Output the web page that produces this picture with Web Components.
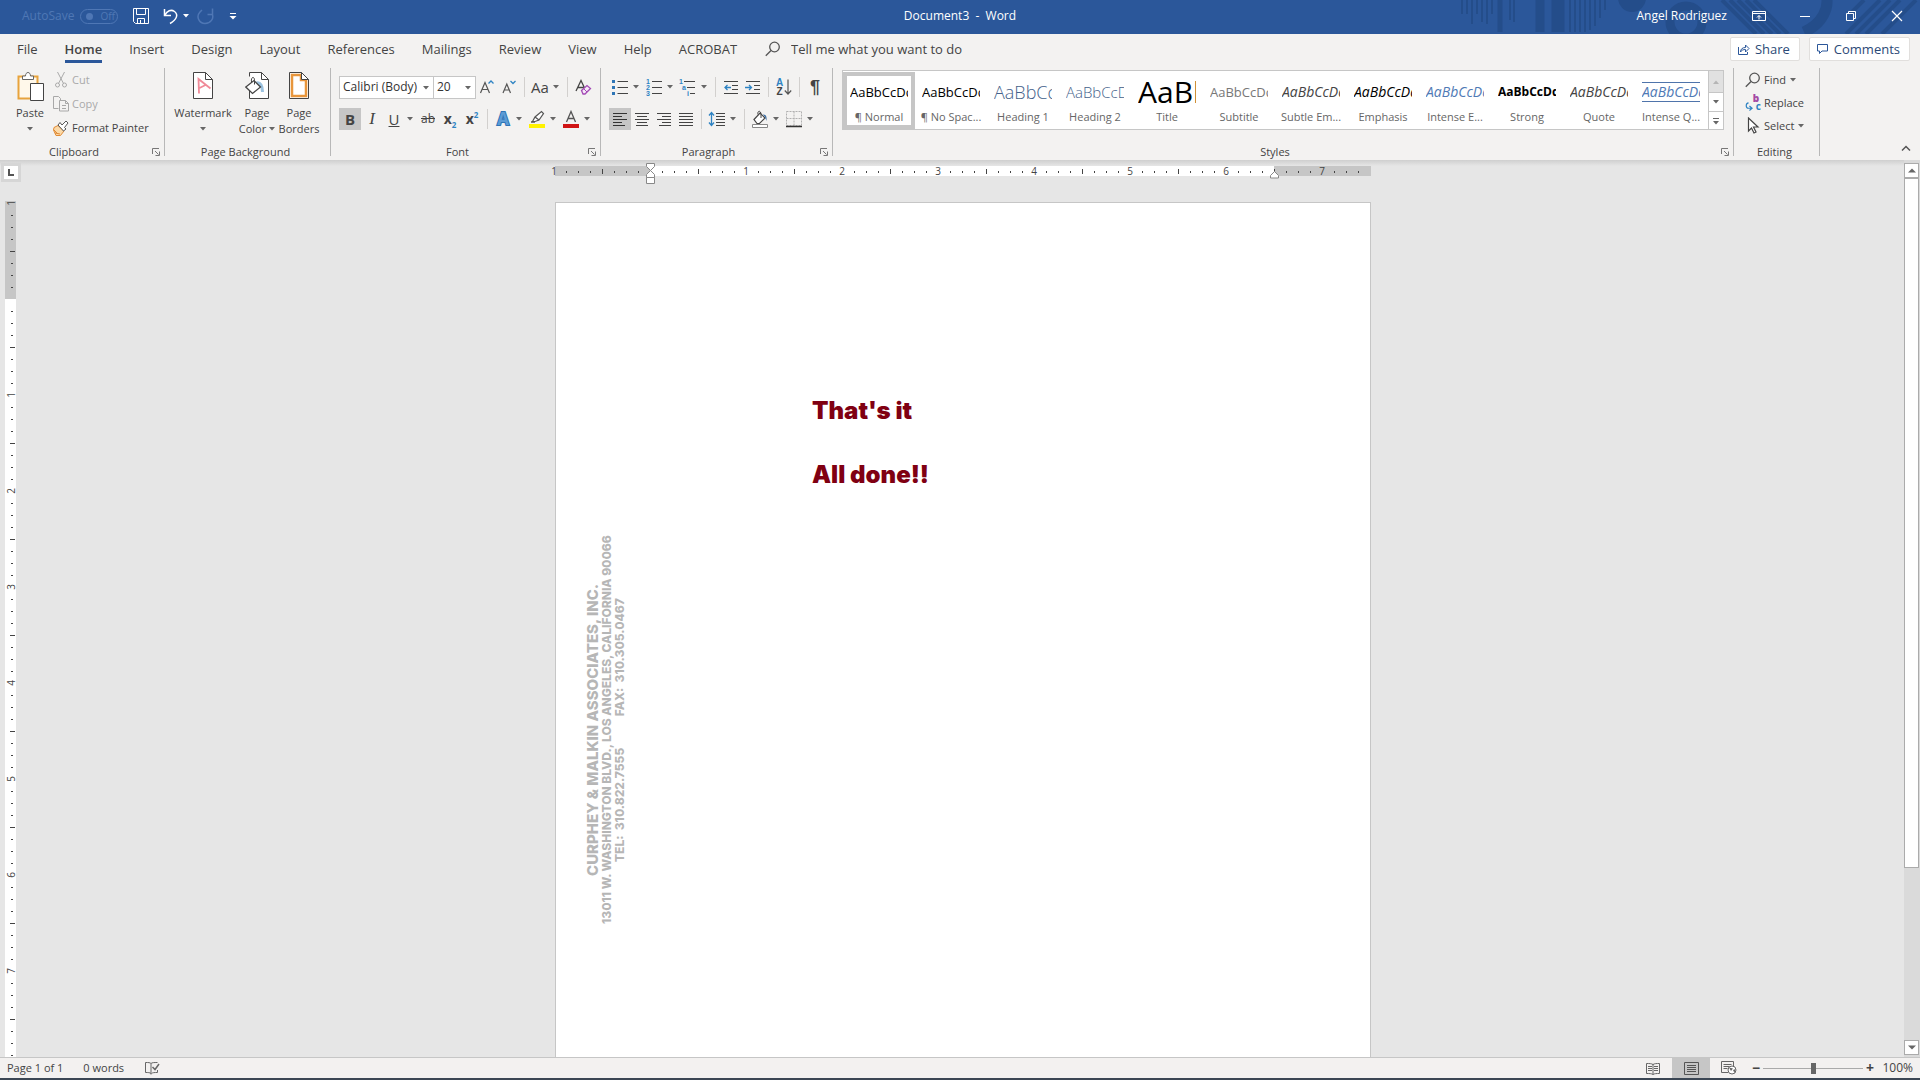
<!DOCTYPE html>
<html lang="en">
<head>
<meta charset="utf-8">
<title>Document3 - Word</title>
<style>
  html, body { height: 100%; margin: 0; }
  body {
    font-family: "Open Sans", "Noto Sans", sans-serif;
    font-size: 12px;
    line-height: 16px;
    color: #444;
    overflow: hidden;
  }
</style>
</head>
<body>
<word-app></word-app>

<script>
// name: [width, height, markup]
const ICONS = {
  save: [18, 18, '<g fill="none" stroke="#fff"><path d="M1.5 1.5h15v15h-13l-2-2z"/><path d="M4.500 1.500v6h9v-6M5.500 16.500v-5h7v5M8.500 16v-3"/></g>'],
  undo: [18, 18, '<path d="M2.500 2v6.500H9M3 8C5 4 9 2 12.500 4.500c4 3 2.500 8-4.500 12" fill="none" stroke="#fff" stroke-width="1.500"/>'],
  redo: [18, 18, '<path d="M11.500 7.500h5v-6M16 6.500c2.500 5-1.500 10-7 10S-.5 10 4 5l2-2" fill="none" stroke="#4f77b5" stroke-width="1.500"/>'],
  customize: [8, 8, '<path d="M1 1.500h6" stroke="#fff"/><path d="M.5 4h7L4 7.500z" fill="#fff"/>'],
  downWhite: [6, 4, '<path d="M0 0h6L3 3.500z" fill="#fff"/>'],
  down: [6, 4, '<path d="M0 0h6L3 3.500z" fill="#666"/>'],
  up: [8, 5, '<path d="M0 4.500h8L4 .5z" fill="#666"/>'],
  upDim: [6, 4, '<path d="M0 4h6L3 .5z" fill="#b5b5b5"/>'],
  downBig: [8, 5, '<path d="M0 .5h8L4 4.500z" fill="#666"/>'],
  more: [8, 8, '<path d="M1 1.500h6" stroke="#666"/><path d="M1 4h6L4 7.500z" fill="#666"/>'],
  ribbonOpts: [14, 12, '<g fill="none" stroke="#fff"><path d="M.5 1.500h13v9H.5zM.5 3.500h13M7 9.500v-4M5 7.500l2-2 2 2"/></g>'],
  minimize: [12, 12, '<path d="M1 6.500h10" stroke="#fff"/>'],
  restore: [12, 12, '<g fill="none" stroke="#fff"><path d="M1.500 3.500h7v7h-7zM3.500 3V1.500h7v7H9"/></g>'],
  close: [12, 12, '<path d="M1 1l10 10M11 1L1 11" stroke="#fff" stroke-width="1.200"/>'],
  search: [16, 16, '<g fill="none" stroke="#555" stroke-width="1.300"><circle cx="9.500" cy="6" r="4.800"/><path d="M6 9.500L.8 14.800"/></g>'],
  share: [13, 13, '<g fill="none" stroke="#2b579a"><path d="M1.500 4v7.500h9V9"/><path d="M3.500 9c0-3 2-4.500 5-4.500V2l3.500 3.500L8.500 9V6.500c-2 0-4 .5-5 2.500z"/></g>'],
  comment: [13, 12, '<path d="M1.500 1.500h10v6.500H6l-2.500 2.500V8h-2z" fill="none" stroke="#2b579a"/>'],
  paste: [28, 32, '<path d="M2.500 5.500h19v22h-19z" fill="#fff8ea" stroke="#e8a33d" stroke-width="2"/><path d="M6.500 8.500V5h3c0-2 1-3.500 2.500-3.500S14.500 3 14.500 5h3v3.500z" fill="#fff" stroke="#666"/><path d="M14.500 12.500h13v17h-13z" fill="#fff" stroke="#444"/>'],
  cut: [12, 16, '<g fill="none" stroke="#aaa"><path d="M2.500 0l6 11.500M9.500 0l-6 11.500"/><circle cx="2.500" cy="13" r="2"/><circle cx="9.500" cy="13" r="2"/></g>'],
  copy: [17, 16, '<g fill="none" stroke="#a8a8a8"><path d="M5.500 12.500h-5V.5h5l2 2V4"/><path d="M6.500 4.500h6l3 3v7.500h-9zM12.500 4.500v3h3M9 9.500h4M9 12.500h4"/></g>'],
  painter: [16, 15, '<path d="M1 6.500l4-2 6 5.500-3.500 4.500H3L.5 9z" fill="#fbd9a8" stroke="#e08a34"/><path d="M2 12l5 1M1 9l3 3" stroke="#e08a34"/><path d="M5 4l2-2.500 2 2.500 4-4 2 2-3.500 4.500L13 8l-2.500 2z" fill="#fff" stroke="#555"/>'],
  watermark: [23, 30, '<path d="M1.500 1.500h12l7 7v19h-19z" fill="#fff" stroke="#444"/><path d="M13.500 1.500v7h7" fill="none" stroke="#444"/><path d="M7 22.500L6.500 8l12 9.500M6.500 17.500l7-3.500" fill="none" stroke="#f08a98" stroke-width="1.800"/>'],
  pageColor: [25, 30, '<path d="M5.500 1.500h11l7 7v19h-19z" fill="#fff"/><path d="M4.500 19v8.500h19v-19l-7-7h-12v4M16.500 1.500v7h7" fill="none" stroke="#444"/><path d="M11.500 12c4-1 6 3 6 9" fill="none" stroke="#9cc3e0" stroke-width="3"/><path d="M.8 16L9 9.500l6.500 6.500-8 6.500z" fill="#fff" stroke="#444" stroke-width="1.300"/><path d="M6.500 11c-1-5 3-6.500 3-1.500v4" fill="none" stroke="#444"/>'],
  pageBorders: [23, 30, '<path d="M1.500 1.500h12l7 7v19h-19z" fill="#fff" stroke="#444"/><path d="M4 4h9v5h5v16H4z" fill="none" stroke="#e8963c" stroke-width="2.500"/><path d="M13.500 1.500v7h7z" fill="#fff" stroke="#444"/>'],
  launcher: [8, 8, '<g fill="none" stroke="#777"><path d="M.5 6V.5H7M3 3l3.500 3.500M7.500 3.500v4h-4"/></g>'],
  grow: [16, 16, '<path d="M1.500 14L6 3.500 10.500 14M3 10.500h6" fill="none" stroke="#555" stroke-width="1.200"/><path d="M9.500 4.500L12 2l2.500 2.500" fill="none" stroke="#2e83c3" stroke-width="1.300"/>'],
  shrink: [16, 16, '<path d="M2 14l3.800-9 3.700 9M3.500 11h5" fill="none" stroke="#555" stroke-width="1.200"/><path d="M9.500 2L12 4.500 14.500 2" fill="none" stroke="#2e83c3" stroke-width="1.300"/>'],
  eraser: [18, 18, '<path d="M2 13L7 2.500 11 11M4 9.500h5.500" fill="none" stroke="#444" stroke-width="1.300"/><path d="M7.500 12.500l5.500-5 3.500 3-5.500 5.500H9z" fill="#f6eaf8" stroke="#a349b5" stroke-width="1.300"/><path d="M9.500 10.500l3.500 3.500" stroke="#a349b5"/>'],
  highlight: [18, 18, '<path d="M1 14h16v4H1z" fill="#fff200"/><path d="M4.500 11.500L7 7l6.500-5.500 2 2L11 10l-4 1.500z" fill="#fff" stroke="#555" stroke-width="1.200"/><path d="M7 7l4 3M3 12h4" stroke="#555" stroke-width="1.300"/>'],
  fontColor: [18, 18, '<path d="M1 14h16v4H1z" fill="#d01414"/><path d="M4.500 12L9 1.500 13.500 12M6 8.500h6" fill="none" stroke="#555" stroke-width="1.300"/>'],
  bullets: [16, 16, '<path d="M0 1h3v3H0zM0 7h3v3H0zM0 13h3v3H0z" fill="#2e75b6"/><path d="M5.500 2.500H16M5.500 8.500H16M5.500 14.500H16" stroke="#444"/>'],
  alignLeft: [16, 16, '<path d="M1 2.500h14M1 5.500h9M1 8.500h14M1 11.500h9M1 14.500h12" stroke="#333"/>'],
  alignCenter: [16, 16, '<path d="M1 2.500h14M3 5.500h10M1 8.500h14M3 11.500h10M2 14.500h12" stroke="#444"/>'],
  alignRight: [16, 16, '<path d="M1 2.500h14M6 5.500h9M1 8.500h14M6 11.500h9M3 14.500h12" stroke="#444"/>'],
  justify: [16, 16, '<path d="M1 2.500h14M1 5.500h14M1 8.500h14M1 11.500h14M1 14.500h14" stroke="#444"/>'],
  outdent: [16, 16, '<path d="M1 2.500h14M9 6.500h6M9 10.500h6M1 14.500h14" stroke="#444"/><path d="M8 8.500H2M4.500 6L2 8.500 4.500 11" fill="none" stroke="#2e83c3" stroke-width="1.300"/>'],
  indent: [16, 16, '<path d="M1 2.500h14M9 6.500h6M9 10.500h6M1 14.500h14" stroke="#444"/><path d="M0 8.500h6.500M4 6l2.500 2.500L4 11" fill="none" stroke="#2e83c3" stroke-width="1.300"/>'],
  arrowDown: [8, 16, '<path d="M4 .5V15M.8 11.500L4 15l3.200-3.500" fill="none" stroke="#555" stroke-width="1.200"/>'],
  spacing: [18, 16, '<path d="M8 2.500h9M8 5.500h9M8 8.500h9M8 11.500h9M8 14.500h9" stroke="#444"/><path d="M3.500 1.500v13M1 4.500l2.500-3L6 4.500M1 11.500l2.500 3 2.500-3" fill="none" stroke="#2e83c3" stroke-width="1.300"/>'],
  shading: [18, 18, '<path d="M1.500 14.500h15v3h-15z" fill="#fff" stroke="#888"/><path d="M3 9.500L9 3l5 5-5.500 5.500H6z" fill="#fff" stroke="#444" stroke-width="1.200"/><path d="M7 4.500c-1-4 3-4.500 3 0V8" fill="none" stroke="#444"/><path d="M12 4.500c3 0 4 2 3.500 6.500l-1.500-4z" fill="#3a6ea5"/>'],
  borders: [16, 18, '<path d="M.5 1.500h15v14H.5zM8 1.500v14M.5 8.500h15" fill="none" stroke="#b0b0b0" stroke-dasharray="2 1"/><path d="M0 16.500h16" stroke="#333" stroke-width="1.500"/>'],
  arrow: [14, 17, '<path d="M2.500 1v13l3-3 2.500 5 2-1-2.500-5H12z" fill="#fff" stroke="#444" stroke-width="1.200"/>'],
  swap: [9, 9, '<path d="M4 .5C.5 1 .5 6.500 4 6.500h3.500M5 4l3 2.500L5 9" fill="none" stroke="#2e83c3" stroke-width="1.300"/>'],
  collapse: [10, 7, '<path d="M1 5.500l4-4 4 4" fill="none" stroke="#555" stroke-width="1.500"/>'],
  proof: [16, 14, '<g fill="none" stroke="#666"><path d="M7 12.500c-1-1-3-1-5.500-1V1.500c3 0 4.500 0 5.500 1v11M7 2.500c1-1 3-1 6.500-1M13.500 9v2.500c-3 0-5 0-6 1"/><path d="M8.500 6l2.500 2.500L15 3" stroke-width="1.500"/></g>'],
  readMode: [14, 13, '<path d="M.5 1.500c3 0 5 0 6.500 1 1.500-1 3.500-1 6.500-1v10c-3 0-5 0-6.500 1-1.500-1-3.500-1-6.500-1zM7 2v10.500M2 4.500h4M2 6.500h4M2 8.500h4M8 4.500h4M8 6.500h4M8 8.500h4" fill="none" stroke="#666"/>'],
  printLayout: [15, 13, '<path d="M.5.500h14v12H.5zM3 3.500h9M3 5.500h9M3 7.500h9M3 9.500h9" fill="none" stroke="#555"/>'],
  webLayout: [16, 14, '<path d="M7 11.500H.5v-11h12V5M2.500 3.500h8M2.500 5.500h6M2.500 7.500h4" fill="none" stroke="#666"/><circle cx="11" cy="9" r="4" fill="#fff" stroke="#666"/><path d="M8 6.500l4 1-2 2.500zM12 9l2.500-1-1 4z" fill="#666"/>']
};

function define(name, css, html) {
  customElements.define(name, class extends HTMLElement {
    constructor() {
      super();
      this.attachShadow({ mode: "open" });
    }
    connectedCallback() {
      const markup = typeof html === "function" ? html(this) : html;
      this.shadowRoot.innerHTML = `<style>
        *, *::before { box-sizing: border-box; }
        button { font: inherit; color: inherit; background: none; border: 0; padding: 0; margin: 0; }
        ${css}</style>${markup}`;
    }
  });
}

define("ui-icon", `
  :host { display: inline-flex; flex: none; }
  svg { display: block; }
`, el => {
  const [w, h, body] = ICONS[el.getAttribute("name")];
  return `<svg width="${w}" height="${h}" viewBox="0 0 ${w} ${h}" aria-hidden="true">${body}</svg>`;
});

/* ---------- title bar ---------- */

define("title-art", `
  :host { display: block; position: absolute; top: 0; right: 0; height: 34px; overflow: hidden; }
  svg { display: block; }
`, () => {
  const bars = [[2, 14], [7, 14], [12, 24], [17, 14], [22, 22], [27, 24], [32, 14], [50, 20], [54, 22], [110, 32], [115, 32], [120, 32], [125, 32], [130, 30], [135, 26], [140, 18], [145, 10]]
    .map(([x, h]) => `<path d="M${x} 0v${h}" stroke-width="2"/>`).join("");
  return `<svg width="460" height="34" fill="none" stroke="#244d8a">${bars}
    <path d="M40 0v32" stroke-width="5"/><path d="M80 0v32" stroke-width="9"/><path d="M98 0v32" stroke-width="13"/>
    <circle cx="172" cy="-2" r="14" fill="#244d8a" stroke="none"/>
    <circle cx="226" cy="22" r="16" stroke-width="9"/>
    <path d="M262 0l34 34M270 0l34 34M278 0l34 34M286 0l34 34M294 0l34 34" stroke-width="4"/>
    <path d="M366 -6c4 14-4 30-22 38" stroke-width="11"/>
    <path d="M386 34l34-34M396 34l34-34M406 34l34-34M422 34l34-34M390 14l14-14" stroke-width="4"/>
  </svg>`;
});

define("title-bar", `
  :host {
    display: grid; grid-template-columns: 1fr auto 1fr; align-items: center;
    position: relative; height: 34px; background: #2b579a; color: #fff; padding-bottom: 2px; box-sizing: border-box;
  }
  .quick, .window { display: flex; align-items: center; position: relative; }
  .quick { padding-left: 22px; }
  button { display: flex; align-items: center; justify-content: center; height: 32px; }
  .auto { color: #4f77b5; gap: 6px; }
  .pill { display: flex; align-items: center; width: 38px; height: 15px; border: 1px solid #4f77b5; border-radius: 8px; font-size: 10px; gap: 7px; padding-left: 5px; line-height: 13px; }
  .pill::before { content: ""; width: 7px; height: 7px; border-radius: 50%; background: #4f77b5; }
  .save { width: 42px; margin-left: 2px; }
  .undo { width: 26px; gap: 3px; }
  .redo { width: 34px; }
  .more { width: 22px; }
  .window { justify-content: flex-end; }
  .window button { width: 46px; }
  .user { margin-right: 9px; }
  .title { white-space: pre; }
`, `
  <title-art></title-art>
  <div class="quick">
    <button class="auto" disabled>AutoSave <span class="pill">Off</span></button>
    <button class="save" aria-label="Save"><ui-icon name="save"></ui-icon></button>
    <button class="undo" aria-label="Undo"><ui-icon name="undo"></ui-icon><ui-icon name="downWhite"></ui-icon></button>
    <button class="redo" aria-label="Redo" disabled><ui-icon name="redo"></ui-icon></button>
    <button class="more" aria-label="Customize"><ui-icon name="customize"></ui-icon></button>
  </div>
  <div class="title">Document3  -  Word</div>
  <div class="window">
    <span class="user">Angel Rodriguez</span>
    <button aria-label="Ribbon options"><ui-icon name="ribbonOpts"></ui-icon></button>
    <button aria-label="Minimize"><ui-icon name="minimize"></ui-icon></button>
    <button aria-label="Restore"><ui-icon name="restore"></ui-icon></button>
    <button aria-label="Close"><ui-icon name="close"></ui-icon></button>
  </div>
`);

/* ---------- tabs ---------- */

define("ribbon-tab", `
  :host { display: block; }
  button { position: relative; display: block; height: 28px; line-height: 28px; padding: 0 13px; font-size: 13px; }
  :host([active]) button { font-weight: 600; }
  :host([active]) button::before {
    content: ""; position: absolute; left: 13px; right: 13px; bottom: 0; height: 3px; background: #2b579a;
  }
`, `<button role="tab"><slot></slot></button>`);

define("ribbon-tabs", `
  :host { display: flex; align-items: center; height: 30px; padding: 0 10px 0 4px; font-size: 13px; }
  nav { display: flex; gap: 1px; }
  label { display: flex; align-items: center; flex: 1; gap: 10px; margin-left: 15px; }
  input { flex: 1; font: inherit; color: #444; background: none; border: 0; outline: 0; padding: 0; height: 24px; }
  input::placeholder { color: #444; opacity: 1; }
  .action { display: flex; align-items: center; gap: 5px; height: 24px; padding: 0 9px 0 6px; margin-left: 9px; background: #fff; border: 1px solid #e1dfdd; border-radius: 2px; color: #2b4a77; }
`, `
  <nav role="tablist">
    <ribbon-tab>File</ribbon-tab>
    <ribbon-tab active>Home</ribbon-tab>
    <ribbon-tab>Insert</ribbon-tab>
    <ribbon-tab>Design</ribbon-tab>
    <ribbon-tab>Layout</ribbon-tab>
    <ribbon-tab>References</ribbon-tab>
    <ribbon-tab>Mailings</ribbon-tab>
    <ribbon-tab>Review</ribbon-tab>
    <ribbon-tab>View</ribbon-tab>
    <ribbon-tab>Help</ribbon-tab>
    <ribbon-tab>ACROBAT</ribbon-tab>
  </nav>
  <label><ui-icon name="search"></ui-icon><input aria-label="Tell me what you want to do" placeholder="Tell me what you want to do"></label>
  <button class="action"><ui-icon name="share"></ui-icon>Share</button>
  <button class="action"><ui-icon name="comment"></ui-icon>Comments</button>
`);

/* ---------- ribbon building blocks ---------- */

define("ribbon-group", `
  :host { display: flex; height: 92px; }
  .main { flex: 1; min-width: 0; display: flex; flex-direction: column; padding-left: 8px; }
  .body { flex: 1; }
  .foot { display: flex; align-items: center; height: 16px; padding-right: 4px; margin-left: -8px; }
  .foot span { flex: 1; text-align: center; }
  .foot button { display: flex; padding-left: 4px; }
  .line { width: 1px; height: 88px; background: #b8b8b8; }
`, el => `
  <div class="main">
    <div class="body"><slot></slot></div>
    <div class="foot"><span>${el.getAttribute("label")}</span>${el.hasAttribute("launcher") ? `<button aria-label="${el.getAttribute("label")} settings"><ui-icon name="launcher"></ui-icon></button>` : ""}</div>
  </div>
  <div class="line"></div>
`);

define("tool-row", `
  :host { display: flex; align-items: center; height: 22px; margin-top: 8px; }
  :host([second]) { margin-top: 10px; }
`, `<slot></slot>`);

define("tool-sep", `
  :host { display: block; width: 1px; height: 20px; margin: 0 4px; background: #d2d0ce; }
`, "");

define("tool-button", `
  :host { display: block; }
  button { display: flex; align-items: center; height: 22px; }
  .face { display: flex; align-items: center; justify-content: center; width: 22px; height: 22px; font-size: 15px; white-space: nowrap; }
  :host([active]) .face { background: #c6c6c6; }
  .drop { width: 12px; padding-left: 2px; display: flex; }
`, el => `
  <button aria-label="${el.getAttribute("label")}">
    <span class="face">${el.getAttribute("icon") ? `<ui-icon name="${el.getAttribute("icon")}"></ui-icon>` : "<slot></slot>"}</span>
    ${el.hasAttribute("drop") ? '<span class="drop"><ui-icon name="down"></ui-icon></span>' : ""}
  </button>
`);

define("tool-select", `
  :host { display: flex; align-items: center; position: relative; height: 23px; background: #fff; border: 1px solid #c6c6c6; box-sizing: border-box; }
  select { appearance: none; width: 100%; height: 21px; border: 0; background: none; font: inherit; font-size: 12px; color: #333; padding: 0 12px 0 3px; outline: 0; }
  ui-icon { position: absolute; right: 4px; top: 9px; pointer-events: none; }
`, el => `
  <select aria-label="${el.getAttribute("label")}"><option>${el.getAttribute("value")}</option></select>
  <ui-icon name="down"></ui-icon>
`);

define("big-button", `
  :host { display: block; }
  button { display: flex; flex-direction: column; align-items: center; width: 100%; padding-top: 3px; }
  .pic { height: 34px; display: flex; align-items: flex-start; }
  .drop { height: 16px; display: flex; align-items: center; }
  .second { display: flex; align-items: center; gap: 3px; }
`, el => {
  const second = el.getAttribute("second");
  const drop = el.hasAttribute("drop") ? '<ui-icon name="down"></ui-icon>' : "";
  return `<button>
    <span class="pic"><ui-icon name="${el.getAttribute("icon")}"></ui-icon></span>
    <slot></slot>
    ${second ? `<span class="second">${second}${drop}</span>` : `<span class="drop">${drop}</span>`}
  </button>`;
});

define("line-button", `
  :host { display: block; }
  button { display: flex; align-items: center; height: 100%; white-space: nowrap; }
  .pic { display: flex; align-items: center; justify-content: center; width: 18px; margin-right: 2px; }
  .drop { margin-left: 4px; display: flex; }
  :host([disabled]) { color: #a9a9a9; }
`, el => `
  <button ${el.hasAttribute("disabled") ? "disabled" : ""}>
    <span class="pic">${el.getAttribute("icon") ? `<ui-icon name="${el.getAttribute("icon")}"></ui-icon>` : '<slot name="pic"></slot>'}</span>
    <slot></slot>
    ${el.hasAttribute("drop") ? '<span class="drop"><ui-icon name="down"></ui-icon></span>' : ""}
  </button>
`);

/* ---------- icons that carry letters ---------- */

define("list-glyph", `
  :host { display: block; }
  svg { display: block; font: bold 7px "Liberation Sans", sans-serif; fill: #2e83c3; }
  path { stroke: #444; }
`, el => el.getAttribute("kind") === "number"
  ? `<svg width="16" height="18"><text x="0" y="6">1</text><text x="0" y="12">2</text><text x="0" y="18">3</text><path d="M6 3.500h10M6 9.500h10M6 15.500h10"/></svg>`
  : `<svg width="18" height="18"><text x="0" y="6">1</text><text x="3" y="12">a</text><text x="8" y="18">i</text><path d="M5 3.500h11M8 9.500h8M11 15.500h5"/></svg>`);

define("sort-glyph", `
  :host { display: flex; align-items: center; gap: 1px; }
  span { display: flex; flex-direction: column; font: bold 10px/9px "Liberation Sans", sans-serif; color: #444; }
  b { color: #2e83c3; }
`, `<span><b>A</b>Z</span><ui-icon name="arrowDown"></ui-icon>`);

define("replace-glyph", `
  :host { display: grid; grid-template-columns: 8px 8px; font: bold 10px/8px "Open Sans", sans-serif; color: #2e83c3; }
  b { color: #a349a4; grid-column: 1 / 3; padding-left: 6px; }
  ui-icon { align-self: start; }
  i { font-style: normal; text-align: right; }
`, `<b>b</b><ui-icon name="swap"></ui-icon><i>c</i>`);

/* ---------- style gallery ---------- */

define("style-card", `
  :host { display: block; flex: none; width: 72px; }
  button { display: block; width: 72px; height: 57px; padding: 4px 3px 0; border: 4px solid transparent; color: #666; text-align: center; }
  :host([active]) button { border-color: #c6c6c6; }
  .sample { display: flex; align-items: center; width: 58px; height: 24px; margin-bottom: 5px; overflow: hidden; white-space: nowrap; color: var(--ink, #000); font-size: var(--size, 13px); font-style: var(--slant, normal); font-weight: var(--weight, 400); line-height: 24px; }
  :host([ruled]) .sample { height: 20px; margin: 2px 0 7px; border: solid #4f74ab; border-width: 1px 0; }
  .name { display: block; white-space: nowrap; margin: 0 -4px; }
`, `<button><span class="sample">AaBbCcDd</span><span class="name"><slot></slot></span></button>`);

define("style-gallery", `
  :host { display: flex; height: 60px; margin: 2px 9px 0 1px; background: #fff; border: 1px solid #c6c6c6; box-sizing: border-box; }
  .cards { display: flex; flex: 1; min-width: 0; overflow: hidden; padding-top: 1px; }
  .scroll { display: grid; grid-template-rows: 21px 19px 18px; width: 15px; border-left: 1px solid #c6c6c6; }
  .scroll button { display: flex; align-items: center; justify-content: center; }
  .scroll button + button { border-top: 1px solid #c6c6c6; }
  .scroll button:first-child { background: #e1e1e1; }
`, `
  <div class="cards"><slot></slot></div>
  <div class="scroll">
    <button aria-label="Previous styles" disabled><ui-icon name="upDim"></ui-icon></button>
    <button aria-label="Next styles"><ui-icon name="down"></ui-icon></button>
    <button aria-label="All styles"><ui-icon name="more"></ui-icon></button>
  </div>
`);

/* ---------- ribbon ---------- */

define("word-ribbon", `
  :host { display: flex; height: 96px; padding-top: 4px; box-sizing: border-box; font-size: 11px; }
  .clipboard { width: 165px; }
  .background { width: 166px; }
  .font { width: 270px; }
  .paragraph { width: 232px; }
  .styles { flex: 1; min-width: 0; }
  .editing { width: 86px; }
  .rest { width: 100px; display: flex; align-items: flex-end; justify-content: flex-end; padding: 0 9px 4px 0; }
  .cols { display: flex; }
  .lines { display: flex; flex-direction: column; }
  .lines line-button { height: 24px; }
  .clipboard big-button { width: 44px; }
  .background .cols { margin-left: -8px; padding-left: 5px; }
  .background big-button { width: 42px; }
  .background .mark { width: 66px; }
  .editing .lines { margin-left: 2px; }
  .editing .lines line-button { height: 23px; }
  .family { width: 95px; }
  .size { width: 43px; margin-left: -1px; }
  b, i, u, s { font-size: 15px; color: #444; }
  i { font-family: "Liberation Serif", serif; font-size: 17px; }
  s { font-size: 12px; }
  .x { font-size: 14px; font-weight: 700; }
  sub, sup { font-size: 8px; line-height: 0; color: #2e83c3; }
  .fx { color: #5b9bd5; font-weight: 700; font-size: 17px; -webkit-text-stroke: 2px #2e75b6; paint-order: stroke fill; }
  .pilcrow { font: bold 18px "Liberation Sans", sans-serif; }
`, `
  <ribbon-group class="clipboard" label="Clipboard" launcher>
    <div class="cols">
      <big-button icon="paste" drop>Paste</big-button>
      <div class="lines">
        <line-button icon="cut" disabled>Cut</line-button>
        <line-button icon="copy" disabled>Copy</line-button>
        <line-button icon="painter">Format Painter</line-button>
      </div>
    </div>
  </ribbon-group>
  <ribbon-group class="background" label="Page Background">
    <div class="cols">
      <big-button class="mark" icon="watermark" drop>Watermark</big-button>
      <big-button icon="pageColor" second="Color" drop>Page</big-button>
      <big-button icon="pageBorders" second="Borders">Page</big-button>
    </div>
  </ribbon-group>
  <ribbon-group class="font" label="Font" launcher>
    <tool-row>
      <tool-select class="family" label="Font" value="Calibri (Body)"></tool-select>
      <tool-select class="size" label="Font size" value="20"></tool-select>
      <tool-button label="Increase font size" icon="grow"></tool-button>
      <tool-button label="Decrease font size" icon="shrink"></tool-button>
      <tool-sep></tool-sep>
      <tool-button label="Change case" drop>Aa</tool-button>
      <tool-sep></tool-sep>
      <tool-button label="Clear formatting" icon="eraser"></tool-button>
    </tool-row>
    <tool-row second>
      <tool-button label="Bold" active><b>B</b></tool-button>
      <tool-button label="Italic"><i>I</i></tool-button>
      <tool-button label="Underline" drop><u>U</u></tool-button>
      <tool-button label="Strikethrough"><s>ab</s></tool-button>
      <tool-button label="Subscript"><span class="x">x<sub>2</sub></span></tool-button>
      <tool-button label="Superscript"><span class="x">x<sup>2</sup></span></tool-button>
      <tool-sep></tool-sep>
      <tool-button label="Text effects" drop><span class="fx">A</span></tool-button>
      <tool-button label="Highlight color" icon="highlight" drop></tool-button>
      <tool-button label="Font color" icon="fontColor" drop></tool-button>
    </tool-row>
  </ribbon-group>
  <ribbon-group class="paragraph" label="Paragraph" launcher>
    <tool-row>
      <tool-button label="Bullets" icon="bullets" drop></tool-button>
      <tool-button label="Numbering" drop><list-glyph kind="number"></list-glyph></tool-button>
      <tool-button label="Multilevel list" drop><list-glyph></list-glyph></tool-button>
      <tool-sep></tool-sep>
      <tool-button label="Decrease indent" icon="outdent"></tool-button>
      <tool-button label="Increase indent" icon="indent"></tool-button>
      <tool-sep></tool-sep>
      <tool-button label="Sort"><sort-glyph></sort-glyph></tool-button>
      <tool-sep></tool-sep>
      <tool-button label="Show marks"><span class="pilcrow">¶</span></tool-button>
    </tool-row>
    <tool-row second>
      <tool-button label="Align left" icon="alignLeft" active></tool-button>
      <tool-button label="Center" icon="alignCenter"></tool-button>
      <tool-button label="Align right" icon="alignRight"></tool-button>
      <tool-button label="Justify" icon="justify"></tool-button>
      <tool-sep></tool-sep>
      <tool-button label="Line spacing" icon="spacing" drop></tool-button>
      <tool-sep></tool-sep>
      <tool-button label="Shading" icon="shading" drop></tool-button>
      <tool-button label="Borders" icon="borders" drop></tool-button>
    </tool-row>
  </ribbon-group>
  <ribbon-group class="styles" label="Styles" launcher>
    <style-gallery>
      <style-card active>¶ Normal</style-card>
      <style-card>¶ No Spac...</style-card>
      <style-card style="--size: 18px; --ink: #44618a; --weight: 300">Heading 1</style-card>
      <style-card style="--size: 15px; --ink: #44618a; --weight: 300">Heading 2</style-card>
      <style-card style="--size: 30px">Title</style-card>
      <style-card style="--ink: #777">Subtitle</style-card>
      <style-card style="--size: 14px; --ink: #444; --slant: italic">Subtle Em...</style-card>
      <style-card style="--size: 14px; --slant: italic">Emphasis</style-card>
      <style-card style="--size: 14px; --ink: #4f7ab5; --slant: italic">Intense E...</style-card>
      <style-card style="--size: 12px; --weight: 700">Strong</style-card>
      <style-card style="--size: 14px; --ink: #444; --slant: italic">Quote</style-card>
      <style-card ruled style="--size: 14px; --ink: #4f7ab5; --slant: italic">Intense Q...</style-card>
    </style-gallery>
  </ribbon-group>
  <ribbon-group class="editing" label="Editing">
    <div class="lines">
      <line-button icon="search" drop>Find</line-button>
      <line-button><replace-glyph slot="pic"></replace-glyph>Replace</line-button>
      <line-button icon="arrow" drop>Select</line-button>
    </div>
  </ribbon-group>
  <div class="rest"><button aria-label="Collapse the ribbon"><ui-icon name="collapse"></ui-icon></button></div>
`);

/* ---------- rulers ---------- */

const INCH = 96;

// Marks every eighth of an inch on both sides of the margin at `origin`.
function rulerMarks(origin, length, place) {
  let out = "";
  for (let n = -8; origin + n * 12 < length; n++) {
    const at = origin + n * 12;
    if (n === 0) continue;
    if (n % 8 === 0) out += place.number(at, Math.abs(n / 8));
    else out += place.tick(at, n % 4 === 0 ? 5 : 2);
  }
  return out;
}

define("h-ruler", `
  :host { display: block; position: relative; width: 816px; height: 24px; padding-top: 6px; box-sizing: border-box; }
  svg { display: block; overflow: visible; font: 10px "Open Sans", sans-serif; fill: #444; }
`, () => {
  const marks = rulerMarks(INCH, 816, {
    number: (x, n) => `<text x="${x - 1}" y="9" text-anchor="middle">${n}</text>`,
    tick: (x, len) => `<path d="M${x - 1} ${len > 2 ? 3 : 5}h1v${len}h-1z"/>`
  });
  return `<svg width="816" height="14">
    <path d="M0 0h96v10H0zM719 0h97v10h-97z" fill="#c6c6c6"/><path d="M96 0h623v10H96z" fill="#fff"/>${marks}
    <g fill="#fff" stroke="#888"><path d="M91.500 -2.500h8v3l-4 4-4-4z"/><path d="M95.500 4.500l4 4v3h-8v-3z"/><path d="M91.500 11.500h8v6h-8z"/><path d="M719.500 5.500l4 4v2.500h-8v-2.500z"/></g>
  </svg>`;
});

define("v-ruler", `
  :host { display: flex; flex-direction: column; align-items: center; width: 22px; overflow: hidden; box-sizing: border-box; padding-top: 3px; }
  button { flex: none; width: 20px; height: 19px; background: #fff; border: 3px solid #d6d6d6; display: flex; align-items: center; justify-content: center; margin: 0 0 19px 0; }
  svg { flex: none; margin-right: 1px; display: block; font: 10px "Open Sans", sans-serif; fill: #444; }
`, () => {
  const marks = rulerMarks(98, 3000, {
    number: (y, n) => `<text transform="translate(10 ${y}) rotate(-90)" text-anchor="middle">${n}</text>`,
    tick: (y, len) => `<path d="M${len > 2 ? 5 : 6} ${y}v1h${len}v-1z"/>`
  });
  return `<button aria-label="Tab selector"><svg width="7" height="7"><path d="M1 0h2v5h4v2H1z" fill="#555"/></svg></button>
    <svg width="11" height="3000"><path d="M0 0h11v98H0z" fill="#c6c6c6"/><path d="M0 98h11v2902H0z" fill="#fff"/>${marks}</svg>`;
});

/* ---------- document ---------- */

define("doc-page", `
  :host { display: block; position: relative; width: 816px; height: 1056px; flex: none; background: #fff; border: 1px solid #c6c6c6; box-sizing: border-box; margin-top: 18px; }
  .text { padding: 192px 96px 0 256px; font: 900 24px/32px Inter, "Liberation Sans", sans-serif; color: #800012; }
  .letterhead { position: absolute; left: 29px; top: 326px; height: 402px; writing-mode: vertical-rl; transform: rotate(180deg); display: flex; flex-direction: column; align-items: center; font: 800 12px/13px Inter, "Liberation Sans", sans-serif; color: #b6b6b6; white-space: pre; }
  .letterhead strong { font-size: 15px; line-height: 15px; font-weight: 800; }
`, `
  <div class="text"><slot></slot></div>
  <div class="letterhead"><strong>CURPHEY &amp; MALKIN ASSOCIATES, INC.</strong><span>13011 W. WASHINGTON BLVD., LOS ANGELES, CALIFORNIA 90066</span><span>TEL:  310.822.7555            FAX:  310.305.0467</span></div>
`);

define("scroll-bar", `
  :host { display: flex; flex-direction: column; width: 16px; padding: 3px 1px 2px 0; background: #dadada; box-sizing: border-box; }
  button { display: flex; align-items: center; justify-content: center; width: 15px; height: 15px; background: #fff; border: 1px solid #ababab; flex: none; }
  .track { flex: 1; }
  .thumb { height: 80%; background: #fff; border: 1px solid #ababab; }
`, `
  <button aria-label="Scroll up"><ui-icon name="up"></ui-icon></button>
  <div class="track"><div class="thumb"></div></div>
  <button aria-label="Scroll down"><ui-icon name="downBig"></ui-icon></button>
`);

define("work-area", `
  :host { display: flex; flex: 1; min-height: 0; background: linear-gradient(#cfcfcf, #e6e6e6 6px); }
  .canvas { flex: 1; min-width: 0; overflow: hidden; display: flex; flex-direction: column; align-items: center; }
  h-ruler { flex: none; }
`, `
  <v-ruler></v-ruler>
  <div class="canvas"><h-ruler></h-ruler><slot></slot></div>
  <scroll-bar></scroll-bar>
`);

/* ---------- status bar ---------- */

define("status-bar", `
  :host { display: flex; align-items: center; height: 23px; padding: 0 7px; background: #f3f1f0; border-top: 1px solid #c6c6c6; border-bottom: 2px solid #3b4654; box-sizing: border-box; font-size: 11px; }
  button { display: flex; align-items: center; justify-content: center; height: 20px; }
  .info { display: flex; gap: 20px; flex: 1; }
  .view { width: 38px; }
  .view.on { background: #c6c6c6; }
  .zoom { font-weight: 700; font-size: 14px; width: 12px; }
  .out { margin-left: 2px; }
  input { appearance: none; width: 100px; height: 12px; margin: 0 1px; background: linear-gradient(#aaa, #aaa) center / 100% 1px no-repeat; }
  input::-webkit-slider-thumb { appearance: none; width: 5px; height: 11px; background: #666; }
  .percent { width: 37px; justify-content: flex-end; font-size: 12px; }
`, `
  <div class="info">
    <button>Page 1 of 1</button>
    <button>0 words</button>
    <button aria-label="Proofing"><ui-icon name="proof"></ui-icon></button>
  </div>
  <button class="view" aria-label="Read mode"><ui-icon name="readMode"></ui-icon></button>
  <button class="view on" aria-label="Print layout"><ui-icon name="printLayout"></ui-icon></button>
  <button class="view" aria-label="Web layout"><ui-icon name="webLayout"></ui-icon></button>
  <button class="zoom out" aria-label="Zoom out">−</button>
  <input type="range" min="0" max="100" value="50" aria-label="Zoom">
  <button class="zoom" aria-label="Zoom in">+</button>
  <button class="percent">100%</button>
`);

define("word-app", `
  :host { display: flex; flex-direction: column; height: 100vh; background: #f3f2f1; }
  title-bar, ribbon-tabs, word-ribbon, status-bar { flex: none; }
  p { margin: 0 0 32px; }
`, `
  <title-bar></title-bar>
  <ribbon-tabs></ribbon-tabs>
  <word-ribbon></word-ribbon>
  <work-area>
    <doc-page><p>That's it</p><p>All done!!</p></doc-page>
  </work-area>
  <status-bar></status-bar>
`);
</script>
</body>
</html>
